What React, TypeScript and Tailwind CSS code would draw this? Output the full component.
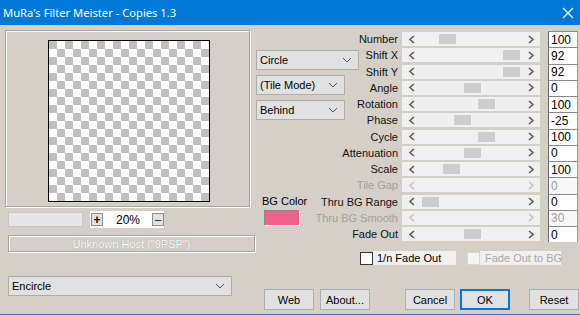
import type { ReactNode } from 'react';

interface SliderRow {
  label: string;
  value: string;
  pos?: number;
  disabled?: boolean;
}

const rows: SliderRow[] = [
  { label: 'Number', value: '100', pos: 17 },
  { label: 'Shift X', value: '92', pos: 81 },
  { label: 'Shift Y', value: '92', pos: 81 },
  { label: 'Angle', value: '0', pos: 42 },
  { label: 'Rotation', value: '100', pos: 56 },
  { label: 'Phase', value: '-25', pos: 32 },
  { label: 'Cycle', value: '100', pos: 56 },
  { label: 'Attenuation', value: '0', pos: 42 },
  { label: 'Scale', value: '100', pos: 21 },
  { label: 'Tile Gap', value: '0', disabled: true },
  { label: 'Thru BG Range', value: '0', pos: 0 },
  { label: 'Thru BG Smooth', value: '30', disabled: true },
  { label: 'Fade Out', value: '0', pos: 42 },
];

function Chevron({ dir, disabled }: { dir: 'left' | 'right'; disabled?: boolean }) {
  return (
    <svg width="8" height="9" viewBox="0 0 8 9" className="shrink-0">
      <polyline
        points={dir === 'left' ? '6,1 2,4.5 6,8' : '2,1 6,4.5 2,8'}
        fill="none"
        stroke={disabled ? '#c4c4c4' : '#5a5a5a'}
        strokeWidth="1.6"
      />
    </svg>
  );
}

function DownArrow() {
  return (
    <svg width="10" height="6" viewBox="0 0 10 6" className="shrink-0">
      <polyline points="1,1 5,5 9,1" fill="none" stroke="#555" strokeWidth="1" />
    </svg>
  );
}

function Combo({ label, className }: { label: string; className: string }) {
  return (
    <div
      className={`flex h-[20px] items-center justify-between border border-[#adadad] bg-[#e1e1e1] pr-[6px] pl-[3px] text-black ${className}`}
    >
      <span>{label}</span>
      <DownArrow />
    </div>
  );
}

function Button({ children, primary, className }: { children: ReactNode; primary?: boolean; className: string }) {
  return (
    <div
      className={`flex h-[21px] w-[50px] items-center justify-center bg-[#e1e1e1] text-black ${
        primary ? 'border-2 border-[#0078d7]' : 'border border-[#adadad]'
      } ${className}`}
    >
      {children}
    </div>
  );
}

function Slider({ row }: { row: SliderRow }) {
  return (
    <div className="flex h-[16.25px] items-center">
      <div className="flex w-[38px] justify-end whitespace-nowrap">
        <span className={row.disabled ? 'text-[#a0a0a0]' : 'text-[#111]'}>{row.label}</span>
      </div>
      <div className="ml-[4px] flex h-[14px] w-[138px] items-center bg-[#f0f0f0]">
        <div className="flex w-[20px] justify-center">
          <Chevron dir="left" disabled={row.disabled} />
        </div>
        <div className="relative h-full flex-1">
          {row.pos !== undefined && (
            <div className="absolute top-[2px] h-[10px] w-[17px] bg-[#cdcdcd]" style={{ left: row.pos }} />
          )}
        </div>
        <div className="flex w-[19px] justify-center">
          <Chevron dir="right" disabled={row.disabled} />
        </div>
      </div>
      <div
        className={`ml-[8px] flex h-full w-[30px] items-center border-t border-r border-l border-t-[#8a8a8a] border-r-[#9a9a9a] border-l-[#6a6a6a] pl-[2px] text-[12px] ${
          row.disabled ? 'bg-[#f8f8f8] text-[#a0a0a0]' : 'bg-white text-black'
        }`}
      >
        {row.value}
      </div>
    </div>
  );
}

export default function App() {
  return (
    <div className="flex h-[315px] w-[580px] flex-col overflow-hidden border-b border-[#2a7fd0] bg-[#d4d0c8] font-['Liberation_Sans',Arial,sans-serif] text-[11px] leading-[14px]">
      {/* title bar */}
      <div className="flex h-[25px] shrink-0 items-center justify-between bg-[#0078d7] pr-[6px] pl-[3px] text-white">
        <span className="font-['Noto_Sans',sans-serif] text-[11.2px]">MuRa's Filter Meister - Copies 1.3</span>
        <svg width="12" height="12" viewBox="0 0 12 12">
          <path d="M1 1 L11 11 M11 1 L1 11" stroke="#fff" strokeWidth="1.2" />
        </svg>
      </div>

      <div className="flex flex-1">
        {/* left column */}
        <div className="flex w-[256px] shrink-0 flex-col">
          <div className="mt-[5px] ml-[5px] flex h-[177px] w-[245px] border border-[#a8a59f] pt-[9px] pl-[42px] shadow-[1px_1px_0_#fff,inset_1px_1px_0_#fff]">
            <div className="h-[162px] w-[162px] border border-black [background-image:repeating-conic-gradient(#fff_0_25%,#c1c1c1_0_50%)] [background-size:16px_16px]" />
          </div>

          <div className="mt-[4px] ml-[8px] flex h-[17px] items-center">
            <div className="h-[15px] w-[75px] border border-[#c8c8c8] bg-[#e6e6e6]" />
            <div className="ml-[7px] flex h-[17px] w-[74px] items-center bg-white pl-[1px]">
              <div className="flex h-[13px] w-[12px] items-center justify-center border border-[#8f8f8f] bg-[#e1e1e1] text-[12px] leading-none font-bold">
                +
              </div>
              <span className="ml-[13px] text-[12px] text-black">20%</span>
              <div className="ml-[12px] flex h-[13px] w-[12px] items-center justify-center border border-[#8f8f8f] bg-[#e1e1e1] leading-none">
                –
              </div>
            </div>
          </div>

          <div className="mt-[7px] ml-[8px] flex h-[17px] w-[247px] items-center justify-center border border-[#a8a59f] text-white shadow-[1px_1px_0_#fff,inset_1px_1px_0_#fff] [text-shadow:0_0_1px_#8c8c8c]">
            Unknown Host ("9PSP")
          </div>

          <Combo label="Encircle" className="mt-[24px] ml-[8px] w-[224px]" />
        </div>

        {/* right part */}
        <div className="flex flex-1 flex-col">
          <div className="flex items-start">
            <div className="flex w-[104px] shrink-0 flex-col pt-[25px]">
              <Combo label="Circle" className="w-[103px]" />
              <Combo label="(Tile Mode)" className="mt-[5px] w-[89px]" />
              <Combo label="Behind" className="mt-[5px] w-[89px]" />
              <span className="mt-[74px] ml-[6px] text-black">BG Color</span>
              <div className="mt-[2px] ml-[8px] h-[16px] w-[36px] border border-t-[#8a8a8a] border-r-white border-b-white border-l-[#8a8a8a] bg-[#f3608c]" />
            </div>
            <div className="flex flex-col pt-[6px]">
              {rows.map((r) => (
                <Slider key={r.label} row={r} />
              ))}
            </div>
          </div>

          <div className="mt-[9px] flex h-[14px] items-center pl-[104px] whitespace-nowrap">
            <div className="h-[13px] w-[13px] border border-[#333] bg-white" />
            <span className="flex h-[14px] w-[83px] items-center bg-[#f0f0f0] pl-[4px] text-black">1/n Fade Out</span>
            <div className="ml-[11px] h-[13px] w-[13px] border border-[#d8d8d8] bg-[#f4f4f4]" />
            <span className="flex h-[14px] w-[81px] items-center bg-[#f0f0f0] pl-[5px] text-[#a8a8a8]">Fade Out to BG</span>
          </div>

          <div className="mt-[24px] flex pl-[8px]">
            <Button className="">Web</Button>
            <Button className="ml-[6px]">About...</Button>
            <Button className="ml-[35px]">Cancel</Button>
            <Button primary className="ml-[5px]">
              OK
            </Button>
            <Button className="ml-[19px]">Reset</Button>
          </div>
        </div>
      </div>
    </div>
  );
}
